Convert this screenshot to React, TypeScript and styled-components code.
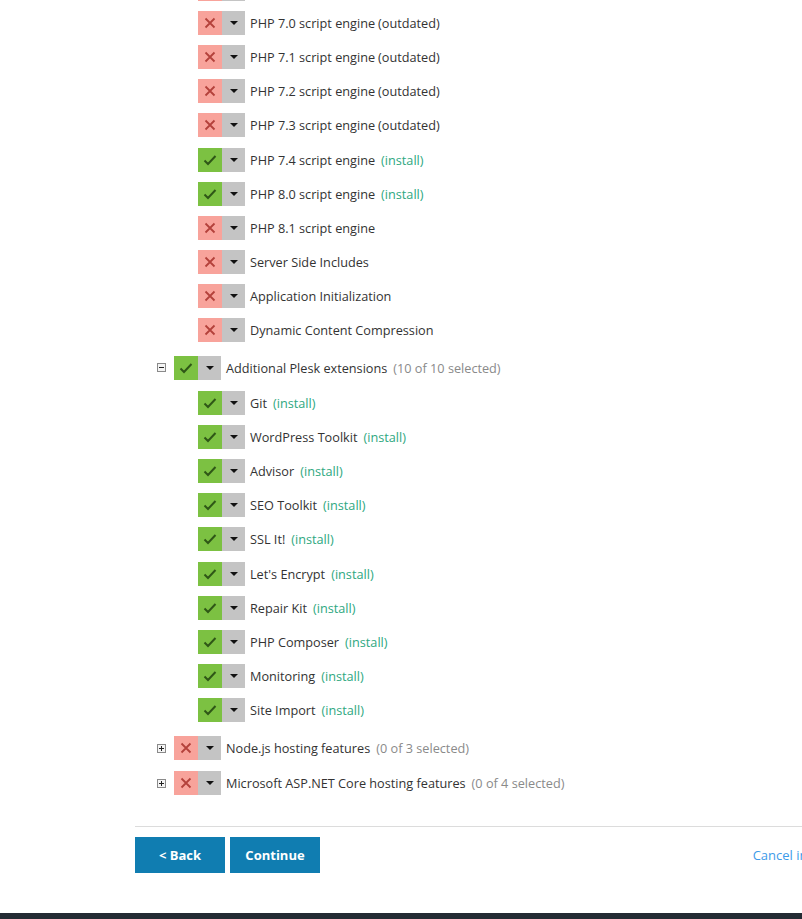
import React from "react";
import styled, { createGlobalStyle } from "styled-components";

type Item = { label: string; on: boolean; note?: "install" | "outdated" };
type Group = { label: string; on: boolean; open: boolean; total: number; items: Item[] };

const GlobalStyle = createGlobalStyle`
  html, body {
    margin: 0;
    padding: 0;
    background: #fff;
    overflow: hidden;
  }
  body {
    font-family: "Open Sans", "Noto Sans", sans-serif;
    font-size: 12.7px;
    color: #333;
  }
`;

const engines: Item[] = [
  { label: "PHP 7.0 script engine", on: false, note: "outdated" },
  { label: "PHP 7.1 script engine", on: false, note: "outdated" },
  { label: "PHP 7.2 script engine", on: false, note: "outdated" },
  { label: "PHP 7.3 script engine", on: false, note: "outdated" },
  { label: "PHP 7.4 script engine", on: true, note: "install" },
  { label: "PHP 8.0 script engine", on: true, note: "install" },
  { label: "PHP 8.1 script engine", on: false },
  { label: "Server Side Includes", on: false },
  { label: "Application Initialization", on: false },
  { label: "Dynamic Content Compression", on: false },
];

const extensions = [
  "Git",
  "WordPress Toolkit",
  "Advisor",
  "SEO Toolkit",
  "SSL It!",
  "Let's Encrypt",
  "Repair Kit",
  "PHP Composer",
  "Monitoring",
  "Site Import",
];

const groups: Group[] = [
  {
    label: "Additional Plesk extensions",
    on: true,
    open: true,
    total: 10,
    items: extensions.map((label) => ({ label, on: true, note: "install" as const })),
  },
  { label: "Node.js hosting features", on: false, open: false, total: 3, items: [] },
  { label: "Microsoft ASP.NET Core hosting features", on: false, open: false, total: 4, items: [] },
];

const Page = styled.div`
  width: 730px;
  margin: -28px 0 0 135px;
`;

const GroupBlock = styled.div`
  padding-left: 22px;
`;

const List = styled.ul<{ $nested?: boolean }>`
  list-style: none;
  margin: ${(p) => (p.$nested ? "1px 0 4px" : "0 0 3px")};
  padding: 0 0 0 41px;
`;

const Row = styled.li<{ $parent?: boolean }>`
  display: flex;
  align-items: center;
  height: ${(p) => (p.$parent ? "35px" : "34.1px")};
  white-space: nowrap;
`;

const Toggle = styled.span`
  position: relative;
  box-sizing: border-box;
  width: 9px;
  height: 9px;
  border: 1px solid #8a8a8a;
  background: #f4f4f4;
  margin-right: 8px;
  &::before,
  &::after {
    content: "";
    position: absolute;
    background: #222;
  }
  &::before {
    left: 1px;
    right: 1px;
    top: 3px;
    height: 1px;
  }
`;

const Plus = styled(Toggle)`
  &::after {
    top: 1px;
    bottom: 1px;
    left: 3px;
    width: 1px;
  }
`;

const Switch = styled.span`
  display: flex;
  height: 24px;
  margin-right: 5px;
  flex: none;
`;

const State = styled.span<{ $on: boolean }>`
  display: flex;
  align-items: center;
  justify-content: center;
  width: 24px;
  background: ${(p) => (p.$on ? "#7cc142" : "#f8a39b")};
`;

const Caret = styled.span`
  display: flex;
  align-items: center;
  justify-content: center;
  width: 23px;
  background: #c4c4c4;
  &::before {
    content: "";
    border-left: 4px solid transparent;
    border-right: 4px solid transparent;
    border-top: 4px solid #111;
  }
`;

const Label = styled.span`
  color: #333;
`;

const Note = styled.span<{ $kind: "install" | "outdated" | "count" }>`
  margin-left: ${(p) => (p.$kind === "outdated" ? "3px" : "6px")};
  color: ${(p) => (p.$kind === "install" ? "#2ea87f" : p.$kind === "count" ? "#8a8a8a" : "#333")};
`;

const Footer = styled.div`
  margin-top: 25px;
  border-top: 1px solid #dcdcdc;
  padding-top: 10px;
  display: flex;
  align-items: center;
  gap: 5px;
`;

const Button = styled.button`
  height: 36px;
  width: 90px;
  border: 0;
  background: #107db1;
  color: #fff;
  font-family: "Open Sans", "Noto Sans", sans-serif;
  font-size: 13px;
  font-weight: 700;
  cursor: pointer;
`;

const Cancel = styled.a`
  margin-left: auto;
  margin-right: 2px;
  color: #3d9be9;
  font-size: 13px;
  text-decoration: none;
`;

const BottomBar = styled.div`
  margin-top: 40px;
  height: 40px;
  background: #232b33;
`;

const Mark = ({ on }: { on: boolean }) =>
  on ? (
    <svg width="14" height="12" viewBox="0 0 14 12">
      <path d="M1.5 6.5 L5 10 L12.5 2" fill="none" stroke="#2f5717" strokeWidth="2" />
    </svg>
  ) : (
    <svg width="12" height="12" viewBox="0 0 12 12">
      <path d="M1.5 1.5 L10.5 10.5 M10.5 1.5 L1.5 10.5" fill="none" stroke="#b4413b" strokeWidth="1.8" />
    </svg>
  );

const Toggler = ({ on }: { on: boolean }) => (
  <Switch>
    <State $on={on}>
      <Mark on={on} />
    </State>
    <Caret />
  </Switch>
);

const ItemRow = ({ item }: { item: Item }) => (
  <Row>
    <Toggler on={item.on} />
    <Label>{item.label}</Label>
    {item.note && <Note $kind={item.note}>({item.note})</Note>}
  </Row>
);

const App = () => {
  return (
    <>
      <GlobalStyle />
      <Page>
        <GroupBlock>
          <List>
            {/* row above the fold, only its switch peeks in */}
            <Row>
              <Toggler on={false} />
            </Row>
            {engines.map((e) => (
              <ItemRow key={e.label} item={e} />
            ))}
          </List>
          {groups.map((g) => (
            <div key={g.label}>
              <Row as="div" $parent>
                {g.open ? <Toggle /> : <Plus />}
                <Toggler on={g.on} />
                <Label>{g.label}</Label>
                <Note $kind="count">
                  ({g.items.length} of {g.total} selected)
                </Note>
              </Row>
              {g.open && (
                <List $nested>
                  {g.items.map((i) => (
                    <ItemRow key={i.label} item={i} />
                  ))}
                </List>
              )}
            </div>
          ))}
        </GroupBlock>
        <Footer>
          <Button>&lt; Back</Button>
          <Button>Continue</Button>
          <Cancel href="#">Cancel installation</Cancel>
        </Footer>
      </Page>
      <BottomBar />
    </>
  );
};

export default App;
